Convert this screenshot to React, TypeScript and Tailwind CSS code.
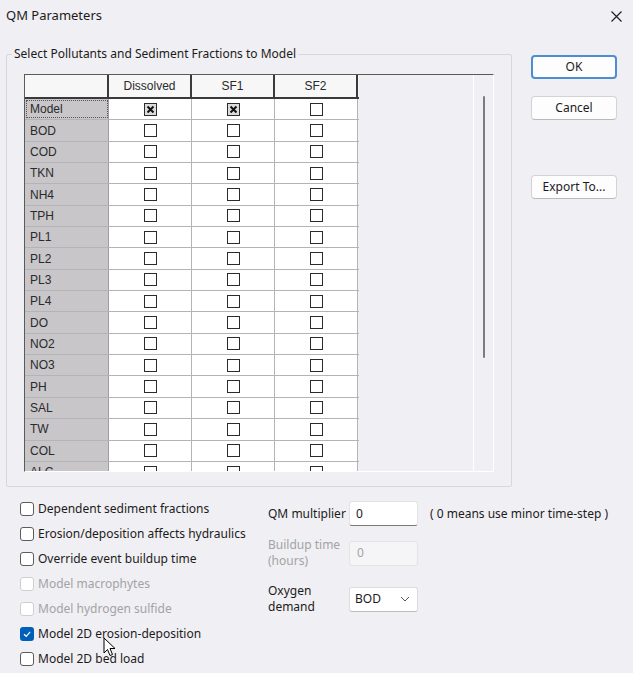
import React from 'react';

const rows = ['Model', 'BOD', 'COD', 'TKN', 'NH4', 'TPH', 'PL1', 'PL2', 'PL3', 'PL4', 'DO', 'NO2', 'NO3', 'PH', 'SAL', 'TW', 'COL', 'ALC'];
const cols = ['Dissolved', 'SF1', 'SF2'];

const options = [
    { label: 'Dependent sediment fractions', checked: false, disabled: false },
    { label: 'Erosion/deposition affects hydraulics', checked: false, disabled: false },
    { label: 'Override event buildup time', checked: false, disabled: false },
    { label: 'Model macrophytes', checked: false, disabled: true },
    { label: 'Model hydrogen sulfide', checked: false, disabled: true },
    { label: 'Model 2D erosion-deposition', checked: true, disabled: false },
    { label: 'Model 2D bed load', checked: false, disabled: false },
];

const GridCheck = ({ checked }: { checked: boolean }) => (
    <div className={`w-[13px] h-[13px] border border-[#2b2b2b] flex items-center justify-center ${checked ? 'bg-[#dcdcdc]' : 'bg-white'}`}>
        {checked && (
            <svg width="9" height="9" viewBox="0 0 9 9">
                <path d="M1.5 1.5 L7.5 7.5 M7.5 1.5 L1.5 7.5" stroke="#111" strokeWidth="2" />
            </svg>
        )}
    </div>
);

const WinCheck = ({ checked, disabled }: { checked: boolean; disabled: boolean }) => {
    if (checked) {
        return (
            <div className="w-[14px] h-[14px] rounded-[3px] bg-[#005fb8] flex items-center justify-center">
                <svg width="10" height="10" viewBox="0 0 10 10">
                    <path d="M2 5.2 L4.2 7.3 L8.2 2.8" stroke="#fff" strokeWidth="1.2" fill="none" />
                </svg>
            </div>
        );
    }
    return <div className={`w-[14px] h-[14px] rounded-[3px] border bg-white ${disabled ? 'border-[#cfcfd2]' : 'border-[#5c5c5c]'}`} />;
};

const Button = ({ label, primary }: { label: string; primary?: boolean }) => (
    <button className={`w-[86px] h-[24px] rounded-[4px] bg-[#fdfdfd] text-[12px] text-[#1b1b1b] ${primary ? 'border-2 border-[#4c8ed1]' : 'border border-[#d3d3d6] border-b-[#b9b9bc]'}`}>
        {label}
    </button>
);

const App: React.FC = () => {
    return (
        <div className="relative w-[633px] h-[673px] overflow-hidden bg-[#f0eff3] text-[#1b1b1b] font-['Noto_Sans',sans-serif]">
            <div className="h-[32px] flex items-center justify-between pl-[6px] pr-[11px]">
                <span className="text-[13px]">QM Parameters</span>
                <svg width="11" height="11" viewBox="0 0 11 11">
                    <path d="M0.5 0.5 L10.5 10.5 M10.5 0.5 L0.5 10.5" stroke="#1b1b1b" strokeWidth="1.1" />
                </svg>
            </div>

            <div className="flex mt-[14px]">
                <fieldset className="ml-[6px] w-[506px] h-[441px] border border-[#d8d7db] rounded-[2px]">
                    <legend className="ml-[5px] px-[2px] text-[12px] leading-[16px]">Select Pollutants and Sediment Fractions to Model</legend>
                    <div className="mt-[12px] ml-[17px] w-[470px] h-[398px] border-t border-l border-[#5a5a5a] border-r border-r-white border-b border-b-white flex overflow-hidden font-['Liberation_Sans',sans-serif] text-[12px] text-[#2a2a2a]">
                        <div className="w-[334px] shrink-0 flex flex-col">
                            <div className="h-[24px] flex shrink-0 bg-[#f7f7f7] border-b-2 border-[#3a3a3a]">
                                <div className="w-[84px] border-r-2 border-[#3a3a3a]" />
                                {cols.map(c => (
                                    <div key={c} className="w-[83px] border-r-2 border-[#3a3a3a] flex items-center justify-center">{c}</div>
                                ))}
                            </div>
                            {rows.map((r, i) => (
                                <div key={r} className="h-[21.35px] shrink-0 flex border-b border-[#b4b4b4]">
                                    <div className={`w-[84px] bg-[#c8c6c9] border-r border-[#9e9e9e] flex items-center pl-[5px] ${i === 0 ? 'outline-1 outline-dotted outline-[#555] -outline-offset-2' : ''}`}>{r}</div>
                                    {cols.map((c, j) => (
                                        <div key={c} className="w-[83px] bg-white border-r border-[#b4b4b4] flex items-center justify-center">
                                            <GridCheck checked={i === 0 && j < 2} />
                                        </div>
                                    ))}
                                </div>
                            ))}
                        </div>
                        <div className="flex-1" />
                        <div className="w-[20px] border-l border-white flex justify-center pt-[21px]">
                            <div className="w-[2px] h-[262px] bg-[#7c7c7e] rounded-full" />
                        </div>
                    </div>
                </fieldset>

                <div className="ml-[19px] flex flex-col pt-[9px]">
                    <Button label="OK" primary />
                    <div className="mt-[15px]"><Button label="Cancel" /></div>
                    <div className="mt-[53px]"><Button label="Export To..." /></div>
                </div>
            </div>

            <div className="flex">
                <div className="pl-[20px] pt-[9px] w-[268px] shrink-0 flex flex-col">
                    {options.map(o => (
                        <div key={o.label} className="h-[25px] flex items-center gap-[4px]">
                            <WinCheck checked={o.checked} disabled={o.disabled} />
                            <span className={`text-[12px] ${o.disabled ? 'text-[#a3a3a6]' : ''}`}>{o.label}</span>
                        </div>
                    ))}
                </div>
                <div className="pt-[14px] flex flex-col text-[12px]">
                    <div className="flex items-center h-[25px]">
                        <span className="w-[81px]">QM multiplier</span>
                        <div className="w-[69px] h-[25px] bg-white border border-[#e2e2e4] border-b-[#7a7a7a] rounded-[3px] flex items-center pl-[6px]">0</div>
                        <span className="ml-[12px]">( 0 means use minor time-step )</span>
                    </div>
                    <div className="flex items-center h-[32px] mt-[11px]">
                        <span className="w-[81px] leading-[16px] text-[#a3a3a6]">Buildup time<br />(hours)</span>
                        <div className="w-[69px] h-[25px] bg-[#f5f5f7] border border-[#e4e4e6] rounded-[3px] flex items-center pl-[7px] text-[#a3a3a6]">0</div>
                    </div>
                    <div className="flex items-center h-[32px] mt-[14px]">
                        <span className="w-[81px] leading-[16px]">Oxygen<br />demand</span>
                        <div className="w-[69px] h-[25px] bg-white border border-[#dcdcde] border-b-[#bdbdbf] rounded-[3px] flex items-center justify-between pl-[5px] pr-[7px]">
                            <span>BOD</span>
                            <svg width="10" height="6" viewBox="0 0 10 6">
                                <path d="M1 1 L5 5 L9 1" stroke="#555" strokeWidth="1" fill="none" />
                            </svg>
                        </div>
                    </div>
                </div>
            </div>

            <svg className="absolute left-[103px] top-[637px]" width="14" height="21" viewBox="0 0 14 21">
                <path d="M1 1 L1 16 L4.5 12.5 L7 18.5 L9.5 17.5 L7 11.5 L12 11.5 Z" fill="#fff" stroke="#000" strokeWidth="1" strokeLinejoin="round" />
            </svg>
        </div>
    );
};

export default App;
